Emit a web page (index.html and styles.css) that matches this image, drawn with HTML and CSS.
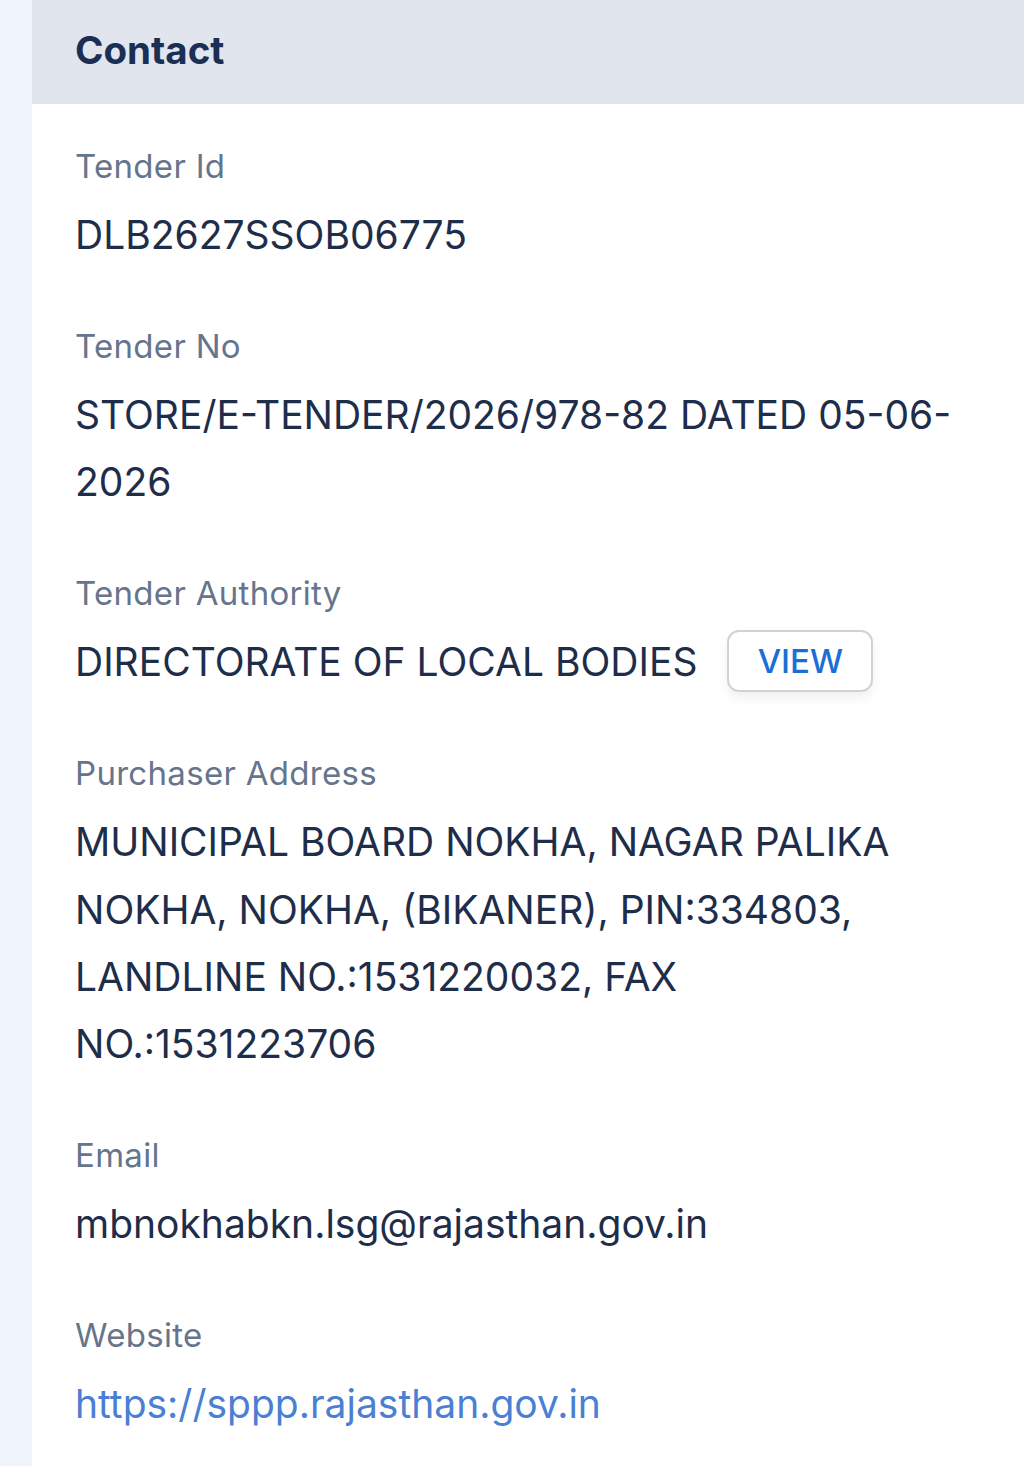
FILE: index.html
```html
<!DOCTYPE html>
<html lang="en">
<head>
<meta charset="utf-8">
<title>Contact</title>
<link rel="stylesheet" href="styles.css">
</head>
<body>
<div class="page">
  <div class="side"></div>
  <main class="panel">
    <header class="panel-head">Contact</header>
    <section class="fields">
      <div class="field">
        <div class="label">Tender Id</div>
        <div class="value">DLB2627SSOB06775</div>
      </div>
      <div class="field">
        <div class="label">Tender No</div>
        <div class="value">STORE/E-TENDER/2026/978-82 DATED 05-06-2026</div>
      </div>
      <div class="field">
        <div class="label">Tender Authority</div>
        <div class="value value-row">
          <span>DIRECTORATE OF LOCAL BODIES</span>
          <button class="view-btn" type="button">VIEW</button>
        </div>
      </div>
      <div class="field">
        <div class="label">Purchaser Address</div>
        <div class="value">MUNICIPAL BOARD NOKHA, NAGAR PALIKA NOKHA, NOKHA, (BIKANER), PIN:334803, LANDLINE NO.:1531220032, FAX NO.:1531223706</div>
      </div>
      <div class="field">
        <div class="label">Email</div>
        <div class="value">mbnokhabkn.lsg@rajasthan.gov.in</div>
      </div>
      <div class="field">
        <div class="label">Website</div>
        <div class="value"><a class="link" href="#">https://sppp.rajasthan.gov.in</a></div>
      </div>
    </section>
  </main>
</div>
</body>
</html>
```
FILE: styles.css
```css
* { box-sizing: border-box; }
html, body { margin: 0; padding: 0; }
body {
  font-family: Inter, "Noto Sans", "Liberation Sans", sans-serif;
  background: #ffffff;
  color: #1e2d4a;
}
.page {
  display: flex;
  min-height: 1466px;
}
.side {
  width: 32px;
  flex: 0 0 32px;
  background: #f0f5fd;
}
.panel {
  flex: 1;
  background: #ffffff;
}
.panel-head {
  height: 104px;
  display: flex;
  align-items: center;
  padding: 0 0 4px 43px;
  background: #e0e5ee;
  color: #1b2f55;
  font-size: 38.5px;
  font-weight: 700;
}
.fields {
  padding: 40px 44px 40px 43px;
}
.field {
  margin-bottom: 55.5px;
}
.label {
  font-size: 33px;
  line-height: 45px;
  letter-spacing: 0.3px;
  color: #66758c;
  margin-bottom: 12px;
}
.value {
  font-size: 39px;
  line-height: 67.4px;
  color: #1e2d4a;
}
.value-row {
  display: flex;
  align-items: center;
  gap: 30px;
}
.view-btn {
  font-family: inherit;
  font-size: 33px;
  font-weight: 500;
  color: #1a6fd6;
  background: #ffffff;
  border: 2px solid #d2d2d2;
  border-radius: 12px;
  height: 62px;
  width: 146px;
  padding: 0;
  margin-top: -2px;
  box-shadow: 0 6px 12px rgba(0,0,0,0.06);
}
.link {
  color: #4a7fd4;
  text-decoration: none;
}
```
